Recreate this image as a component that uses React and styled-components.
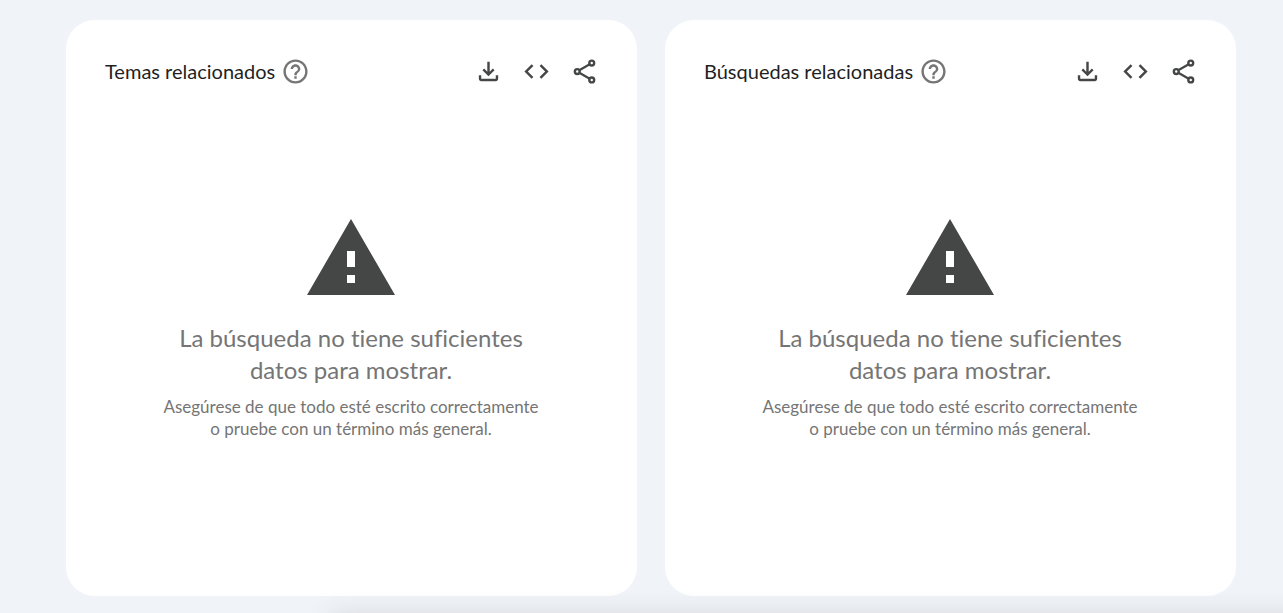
import React from 'react'
import styled, { createGlobalStyle } from 'styled-components'

const GlobalStyle = createGlobalStyle`
* {
    box-sizing: border-box;
}
body {
    margin: 0;
    background: #f0f4f9;
    font-family: 'Lato', sans-serif;
    font-variant-ligatures: none;
    overflow-x: hidden;
}
`

const Grid = styled.main`
display: grid;
grid-template-columns: 1fr 1fr;
gap: 28px;
padding: 20px 47px 17px 66px;
@media(max-width:900px){
    grid-template-columns: 1fr;
    padding: 20px;
}
`

const Card = styled.section`
min-height: 576px;
padding: 27px 29px 28px 39px;
background: #fff;
border-radius: 29px;
`

const Header = styled.header`
display: flex;
align-items: center;
height: 48px;
`

const Title = styled.h2`
margin: 0;
font-size: 20px;
font-weight: 400;
line-height: 24px;
color: #1f1f1f;
`

const Actions = styled.div`
display: flex;
margin-left: auto;
`

const IconButton = styled.button`
display: flex;
align-items: center;
justify-content: center;
width: ${(props) => (props.$help ? '40px' : '48px')};
height: 48px;
padding: 0;
border: 0;
border-radius: 50%;
background: none;
color: ${(props) => (props.$help ? '#757575' : '#444746')};
cursor: pointer;
svg {
    width: 29px;
    height: 29px;
}
`

const Empty = styled.div`
display: flex;
flex-direction: column;
align-items: center;
padding: 116px 11px 0 0;
text-align: center;
color: #757575;
`

const WarningIcon = styled.svg`
width: 96px;
height: 96px;
fill: #444746;
`

const EmptyTitle = styled.p`
margin: 15px 0 10px;
font-size: 24px;
line-height: 32px;
`

const EmptyText = styled.p`
margin: 0;
font-size: 17px;
line-height: 22px;
`

const BottomBar = styled.div`
position: fixed;
top: 100%;
left: 330px;
right: -40px;
height: 60px;
box-shadow: 0 0 24px rgba(60, 30, 40, 0.12);
pointer-events: none;
`

function HelpIcon() {
  return (
    <svg viewBox='0 0 24 24' fill='currentColor' aria-hidden='true'>
      <path d='M11 18h2v-2h-2v2zm1-16C6.48 2 2 6.48 2 12s4.48 10 10 10 10-4.48 10-10S17.52 2 12 2zm0 18c-4.41 0-8-3.59-8-8s3.59-8 8-8 8 3.59 8 8-3.59 8-8 8zm0-14c-2.21 0-4 1.79-4 4h2c0-1.1.9-2 2-2s2 .9 2 2c0 2-3 1.75-3 5h2c0-2.25 3-2.5 3-5 0-2.21-1.79-4-4-4z' />
    </svg>
  )
}

function DownloadIcon() {
  return (
    <svg viewBox='0 0 24 24' fill='currentColor' aria-hidden='true'>
      <path d='M12 16l-5-5 1.4-1.45 2.6 2.6V4h2v8.15l2.6-2.6L17 11l-5 5zm-6 4q-.825 0-1.412-.587Q4 18.825 4 18v-3h2v3h12v-3h2v3q0 .825-.587 1.413Q18.825 20 18 20H6z' />
    </svg>
  )
}

function CodeIcon() {
  return (
    <svg viewBox='0 0 24 24' fill='currentColor' aria-hidden='true'>
      <path d='M8 18l-6-6 6-6 1.425 1.425-4.6 4.6L9.4 16.6 8 18zm8 0l-1.425-1.425 4.6-4.6L14.6 7.4 16 6l6 6-6 6z' />
    </svg>
  )
}

function ShareIcon() {
  return (
    <svg viewBox='0 0 24 24' fill='none' stroke='currentColor' strokeWidth='2' aria-hidden='true'>
      <circle cx='18' cy='5' r='2' />
      <circle cx='6' cy='12' r='2' />
      <circle cx='18' cy='19' r='2' />
      <path d='M7.7 11L16.3 6M7.7 13L16.3 18' strokeWidth='1.8' />
    </svg>
  )
}

function Widget({ title }) {
  return (
    <Card>
      <Header>
        <Title>{title}</Title>
        <IconButton $help aria-label='Ayuda'><HelpIcon /></IconButton>
        <Actions>
          <IconButton aria-label='Descargar'><DownloadIcon /></IconButton>
          <IconButton aria-label='Insertar'><CodeIcon /></IconButton>
          <IconButton aria-label='Compartir'><ShareIcon /></IconButton>
        </Actions>
      </Header>
      <Empty>
        <WarningIcon viewBox='0 0 24 24' aria-hidden='true'>
          <path d='M1 21h22L12 2 1 21zm12-3h-2v-2h2v2zm0-4h-2v-4h2v4z' />
        </WarningIcon>
        <EmptyTitle>
          La búsqueda no tiene suficientes<br />
          datos para mostrar.
        </EmptyTitle>
        <EmptyText>
          Asegúrese de que todo esté escrito correctamente<br />
          o pruebe con un término más general.
        </EmptyText>
      </Empty>
    </Card>
  )
}

function App() {
  return (
    <>
      <GlobalStyle />
      <Grid>
        <Widget title='Temas relacionados' />
        <Widget title='Búsquedas relacionadas' />
      </Grid>
      <BottomBar />
    </>
  )
}

export default App
